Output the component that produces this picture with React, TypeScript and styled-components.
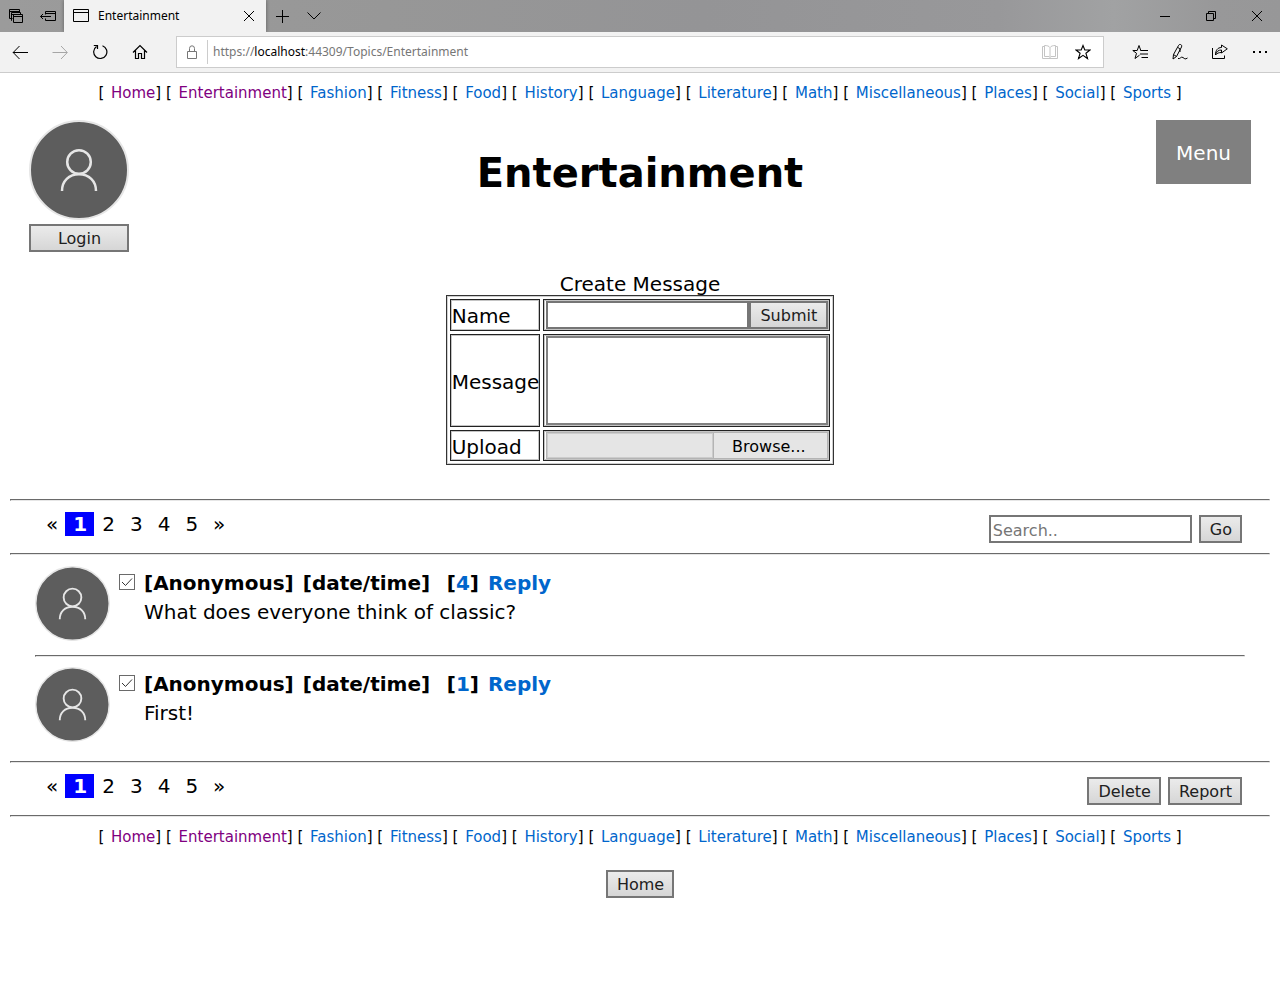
import React from 'react';
import styled, { createGlobalStyle } from 'styled-components';

const GlobalStyle = createGlobalStyle`
  *, *::before, *::after { box-sizing: border-box; }
  body {
    margin: 0;
    background: #fff;
    color: #000;
    font: 20px/24px Verdana, "DejaVu Sans", sans-serif;
  }
  button, input, textarea { font-family: inherit; margin: 0; }
  a { color: #0066cc; text-decoration: none; }
`;

/* ---------- Browser frame ---------- */

const TabStrip = styled.div`
  display: flex;
  height: 32px;
  background: linear-gradient(90deg, #9b9b9b 0%, #979797 30%, #949496 55%, #98989a 78%, #a1a2a3 87%, #989899 95%, #979798 100%);
`;

const FrameButton = styled.button<{ $width: number; $color?: string }>`
  display: flex;
  align-items: center;
  justify-content: center;
  flex: none;
  width: ${(p) => p.$width}px;
  padding: 0;
  border: 0;
  background: none;
  color: ${(p) => p.$color ?? '#000'};
`;

const Tab = styled.div`
  display: flex;
  align-items: center;
  flex: none;
  width: 202px;
  padding-left: 9px;
  background: #f2f2f2;
  font: 12px/16px "Segoe UI", "Noto Sans", sans-serif;
  box-shadow: 0 0 4px rgba(0, 0, 0, 0.4);
  clip-path: inset(0 -4px 0 -4px);
`;

const TabTitle = styled.span`
  flex: 1;
  margin-left: 9px;
`;

const Spacer = styled.div`
  flex: 1;
`;

const Toolbar = styled.div`
  display: flex;
  height: 41px;
  padding: 4px 0;
  background: #f2f2f2;
  border-bottom: 1px solid #cccccc;
`;

const AddressBar = styled.div`
  display: flex;
  align-items: center;
  flex: 1;
  margin: 0 16px;
  border: 1px solid #cccccc;
  background: #fff;
  font: 12px/16px "Segoe UI", "Noto Sans", sans-serif;
  color: #767676;
`;

const Divider = styled.span`
  width: 1px;
  height: 24px;
  margin-right: 5px;
  background: #cccccc;
`;

const Host = styled.span`
  color: #000;
`;

const Icon = styled.svg`
  display: block;
  flex: none;
  fill: none;
  stroke: currentColor;
  stroke-width: 1;
`;

/* ---------- Shared page parts ---------- */

const PushButton = styled.button<{ $wide?: boolean }>`
  flex: none;
  width: ${(p) => (p.$wide ? '100px' : 'auto')};
  height: 28px;
  padding: 2px 8px 0 9px;
  border: 2px solid #767676;
  background: linear-gradient(#ebebeb, #d6d6d6);
  color: #202020;
  font-size: 16px;
  line-height: 22px;
`;

const TextBox = styled.input`
  flex: none;
  width: 203px;
  height: 28px;
  padding: 2px 2px 0;
  border: 2px solid #767676;
  border-radius: 0;
  background: #fff;
  font-size: 16px;
  &::placeholder { color: #767676; opacity: 1; }
`;

const TopicNav = styled.nav`
  padding: 10px 8px 0;
  text-align: center;
  font-size: 15px;
  line-height: 20px;
`;

const TopicLink = styled.a<{ $seen: boolean }>`
  margin-left: 2px;
  color: ${(p) => (p.$seen ? '#800080' : '#0066cc')};
`;

const Rule = styled.hr<{ $inset?: boolean }>`
  height: 2px;
  margin: 0 ${(p) => (p.$inset ? 0 : 10)}px;
  border: 1px solid;
  border-color: #6a6a6a #e6e6e6 #e6e6e6 #6a6a6a;
`;

/* ---------- Header ---------- */

const Header = styled.header`
  display: grid;
  grid-template-columns: 1fr auto 1fr;
  align-items: start;
  padding: 17px 29px 0;
`;

const Account = styled.div`
  display: flex;
  flex-direction: column;
  gap: 4px;
  width: 100px;
`;

const Title = styled.h1`
  margin: 0;
  padding-top: 29px;
  font-size: 40px;
  line-height: 48px;
`;

const MenuButton = styled.button`
  justify-self: end;
  padding: 21px 20px 19px;
  border: 0;
  background: #808080;
  color: #fff;
  font-size: 20px;
  line-height: 24px;
`;

/* ---------- Message form ---------- */

const MessageForm = styled.form`
  display: flex;
  justify-content: center;
  padding: 21px 0 34px;
`;

const FormTable = styled.table`
  border: 1px solid #333;
  border-spacing: 3px;
  box-shadow: inset 0 0 0 1px #cfcfcf;
`;

const Caption = styled.caption`
  line-height: 22px;
`;

const LabelCell = styled.th`
  padding: 2px 0 0 1px;
  border: 1px solid #222;
  box-shadow: inset 0 0 0 1px #c4c4c4;
  text-align: left;
  font-weight: normal;
`;

const FieldCell = styled.td`
  padding: 1px 1px 1px 2px;
  border: 1px solid #222;
  box-shadow: inset 0 0 0 1px #c4c4c4;
`;

const FieldRow = styled.div`
  display: flex;
  width: 282px;
`;

const GrowButton = styled(PushButton)`
  flex: 1;
  padding: 2px 0 0;
`;

const MessageBox = styled.textarea`
  display: block;
  width: 282px;
  height: 89px;
  border: 2px solid #808080;
  border-radius: 0;
  resize: none;
  font-size: 16px;
`;

const FileInput = styled.input`
  width: 1px;
  height: 1px;
  margin-right: -1px;
  opacity: 0;
`;

const FilePicker = styled.label`
  display: flex;
  flex: 1;
  height: 27px;
  background: #e5e5e5;
  border: 1px solid #b4b4b4;
  font-size: 16px;
  line-height: 28px;
`;

const FileName = styled.span`
  flex: 1;
  border: 1px solid #cccccc;
`;

const BrowseText = styled.span`
  width: 114px;
  padding-right: 4px;
  border-left: 1px solid #b4b4b4;
  text-align: center;
`;

/* ---------- Paging and posts ---------- */

const PageBar = styled.div`
  display: flex;
  justify-content: space-between;
  height: 52px;
  padding: 11px 38px 0;
`;

const Pager = styled.nav`
  display: flex;
  align-items: flex-start;
`;

const PageLink = styled.a<{ $current?: boolean }>`
  padding: 0 7px 0 8px;
  background: ${(p) => (p.$current ? '#0000ff' : 'transparent')};
  color: ${(p) => (p.$current ? '#fff' : '#000')};
  font-weight: ${(p) => (p.$current ? 'bold' : 'normal')};
`;

const BarActions = styled.form`
  display: flex;
  gap: 7px;
  padding-top: 3px;
`;

const PostList = styled.main`
  padding: 1px 35px 5px;
`;

const Post = styled.article`
  display: flex;
  padding: 10px 0 14px;
`;

const TickWrap = styled.span`
  display: grid;
  width: 16px;
  height: 16px;
  margin: 8px 9px 0;
  & > * { grid-area: 1 / 1; }
`;

const Tick = styled.input`
  width: 16px;
  height: 16px;
  appearance: none;
  border: 1px solid #6a6a6a;
  background: #fff;
  &:not(:checked) + svg { visibility: hidden; }
`;

const TickMark = styled(Icon)`
  pointer-events: none;
  color: #333;
`;

const PostTitle = styled.h2`
  display: flex;
  gap: 9px;
  margin: 5px 0;
  font-size: 20px;
  line-height: 24px;
`;

const PostDate = styled.span`
  min-width: 135px;
`;

const PostText = styled.p`
  margin: 0;
`;

const Footer = styled.footer`
  display: flex;
  justify-content: center;
  padding: 23px 0;
`;

function Avatar({ size }: { size: number }) {
  return (
    <svg width={size} height={size} viewBox="0 0 100 100" role="img" aria-label="User picture">
      <circle cx="50" cy="50" r="49" fill="#5d5d5d" stroke="#e6e6e6" strokeWidth="2" />
      <g fill="none" stroke="#e6e6e6" strokeWidth="2.500">
        <circle cx="50" cy="42" r="11.800" />
        <path d="M33 71C33 61 40 54.300 50 54.300S67 61 67 71" />
      </g>
    </svg>
  );
}

const topics = [
  'Home', 'Entertainment', 'Fashion', 'Fitness', 'Food', 'History', 'Language',
  'Literature', 'Math', 'Miscellaneous', 'Places', 'Social', 'Sports',
];

function Topics({ label }: { label: string }) {
  return (
    <TopicNav aria-label={label}>
      {topics.map((topic, i) => (
        <React.Fragment key={topic}>
          {'[ '}
          <TopicLink href={`#${topic}`} $seen={i < 2}>{topic}</TopicLink>
          {i === topics.length - 1 ? ' ]' : '] '}
        </React.Fragment>
      ))}
    </TopicNav>
  );
}

function Pages({ label }: { label: string }) {
  return (
    <Pager aria-label={label}>
      {['«', '1', '2', '3', '4', '5', '»'].map((page) => (
        <PageLink key={page} href="#page" $current={page === '1'}>{page}</PageLink>
      ))}
    </Pager>
  );
}

const posts = [
  { replies: 4, text: 'What does everyone think of classic?' },
  { replies: 1, text: 'First!' },
];

function BrowserFrame() {
  return (
    <>
      <TabStrip>
        <FrameButton $width={32} aria-label="Tabs set aside">
          <Icon width="16" height="16" viewBox="0 0 16 16">
            <path d="M4.500 10.500H1.500V1.500H11.500V4M1.500 3.500H11.500M4 12.500H3.500V4.500H12.500V6M3.500 6.500H7" />
            <path d="M5.500 6.500H14.500V14.500H5.500ZM5.500 8.500H14.500" />
          </Icon>
        </FrameButton>
        <FrameButton $width={32} aria-label="Set tabs aside">
          <Icon width="16" height="16" viewBox="0 0 16 16">
            <path d="M5.500 6.500V3.500H15.500V12.500H5.500V10.500M5.500 5.500H15.500M0.500 8.500H11M3 6L0.500 8.500L3 11" />
          </Icon>
        </FrameButton>
        <Tab>
          <Icon width="16" height="16" viewBox="0 0 16 16">
            <path d="M0.500 1.500H15.500V13.500H0.500ZM0.500 4.500H15.500" />
          </Icon>
          <TabTitle>Entertainment</TabTitle>
          <FrameButton $width={34} aria-label="Close tab">
            <Icon width="10" height="10" viewBox="0 0 10 10">
              <path d="M0 0L10 10M10 0L0 10" />
            </Icon>
          </FrameButton>
        </Tab>
        <FrameButton $width={32} aria-label="New tab">
          <Icon width="13" height="13" viewBox="0 0 13 13">
            <path d="M6.500 0V13M0 6.500H13" />
          </Icon>
        </FrameButton>
        <FrameButton $width={32} aria-label="Show tab previews">
          <Icon width="14" height="8" viewBox="0 0 14 8">
            <path d="M0.500 0.500L7 7L13.500 0.500" />
          </Icon>
        </FrameButton>
        <Spacer />
        <FrameButton $width={46} aria-label="Minimize">
          <Icon width="10" height="10" viewBox="0 0 10 10">
            <path d="M0 5.500H10" />
          </Icon>
        </FrameButton>
        <FrameButton $width={46} aria-label="Restore">
          <Icon width="10" height="10" viewBox="0 0 10 10">
            <path d="M0.500 2.500H7.500V9.500H0.500ZM2.500 2.500V0.500H9.500V7.500H7.500" />
          </Icon>
        </FrameButton>
        <FrameButton $width={46} aria-label="Close">
          <Icon width="10" height="10" viewBox="0 0 10 10">
            <path d="M0 0L10 10M10 0L0 10" />
          </Icon>
        </FrameButton>
      </TabStrip>
      <Toolbar>
        <FrameButton $width={40} aria-label="Back">
          <Icon width="16" height="14" viewBox="0 0 16 14">
            <path d="M1 7.500H16M7.500 1L1.200 7.500L7.500 14" />
          </Icon>
        </FrameButton>
        <FrameButton $width={40} $color="#a6a6a6" aria-label="Forward">
          <Icon width="16" height="14" viewBox="0 0 16 14">
            <path d="M0.500 7.500H15M9 1L15.300 7.500L9 14" />
          </Icon>
        </FrameButton>
        <FrameButton $width={40} aria-label="Refresh">
          <Icon width="16" height="16" viewBox="0 0 16 16">
            <path d="M10.500 1.700A6.600 6.600 0 1 1 4.500 2.500M1.800 1.500H5.500V5" strokeWidth="1.200" />
          </Icon>
        </FrameButton>
        <FrameButton $width={40} aria-label="Home">
          <Icon width="16" height="16" viewBox="0 0 16 16">
            <path d="M1 8.500L8 1.500L15 8.500M3.500 6.500V14.500H6.500V9.500H9.500V14.500H12.500V6.500" strokeWidth="1.200" />
          </Icon>
        </FrameButton>
        <AddressBar>
          <FrameButton $width={30} $color="#767676" aria-label="Site information">
            <Icon width="12" height="14" viewBox="0 0 12 14">
              <path d="M1.500 6.500H10.500V13.500H1.500ZM3.500 6.500V3.500A2.500 2.700 0 0 1 8.500 3.500V6.500" />
            </Icon>
          </FrameButton>
          <Divider />
          <span>https://<Host>localhost</Host>:44309/Topics/Entertainment</span>
          <Spacer />
          <FrameButton $width={24} $color="#c4c4c4" aria-label="Reading view">
            <Icon width="16" height="16" viewBox="0 0 16 16">
              <path d="M8 3.500C7 2 5 1.500 2.500 1.500V12.500H7L8 13.500L9 12.500H13.500V1.500C11 1.500 9 2 8 3.500V13.500M2.500 2.500H0.500V14.500H15.500V2.500H13.500" />
            </Icon>
          </FrameButton>
          <FrameButton $width={41} aria-label="Add to favorites">
            <Icon width="16" height="16" viewBox="0 0 16 16">
              <path d="M8 1.500L9.800 6H15L10.900 9.200L12.500 14.500L8 11.300L3.500 14.500L5.100 9.200L1 6H6.200Z" strokeWidth="1.100" />
            </Icon>
          </FrameButton>
        </AddressBar>
        <FrameButton $width={40} aria-label="Favorites">
          <Icon width="16" height="16" viewBox="0 0 16 16">
            <path d="M10 6.500H8.800L7 1.500L5.200 6.500H0.800L4.500 9.300L3 14.500L7.500 11.200M8.500 6.500H16M8 10H16M9.500 13.500H16" />
          </Icon>
        </FrameButton>
        <FrameButton $width={40} aria-label="Add notes">
          <Icon width="16" height="16" viewBox="0 0 16 16">
            <path d="M1 15L1.500 10.500L6.500 1.500C7.500 -0.500 10.500 0.500 9.500 3L4.500 12.500L1 15M1.500 10.500L4.500 12.500M6 3.500L8 5V8M6 14.500C8 15.500 9 12 11 13.500S13 15.500 15.500 14" />
          </Icon>
        </FrameButton>
        <FrameButton $width={40} aria-label="Share">
          <Icon width="16" height="16" viewBox="0 0 16 16">
            <path d="M0.500 4V14.500H12.500V11.500M3.500 11C4 7.500 6.500 6 9.500 6V9L15.300 4.800L9.500 1V3.500C5.500 3.500 3.500 6.500 3.500 11C5 9 7 8.500 9.500 8.500" />
          </Icon>
        </FrameButton>
        <FrameButton $width={40} aria-label="Settings and more">
          <Icon width="16" height="4" viewBox="0 0 16 4">
            <path d="M1 2H3M7 2H9M13 2H15" strokeWidth="2" />
          </Icon>
        </FrameButton>
      </Toolbar>
    </>
  );
}

export default function App() {
  return (
    <>
      <GlobalStyle />
      <BrowserFrame />
      <Topics label="Topics" />
      <Header>
        <Account>
          <Avatar size={100} />
          <PushButton $wide>Login</PushButton>
        </Account>
        <Title>Entertainment</Title>
        <MenuButton>Menu</MenuButton>
      </Header>

      <MessageForm onSubmit={(e) => e.preventDefault()}>
        <FormTable>
          <Caption>Create Message</Caption>
          <tbody>
            <tr>
              <LabelCell scope="row"><label htmlFor="name">Name</label></LabelCell>
              <FieldCell>
                <FieldRow>
                  <TextBox id="name" type="text" />
                  <GrowButton type="submit">Submit</GrowButton>
                </FieldRow>
              </FieldCell>
            </tr>
            <tr>
              <LabelCell scope="row"><label htmlFor="message">Message</label></LabelCell>
              <FieldCell><MessageBox id="message" /></FieldCell>
            </tr>
            <tr>
              <LabelCell scope="row"><label htmlFor="upload">Upload</label></LabelCell>
              <FieldCell>
                <FieldRow>
                  <FileInput id="upload" type="file" />
                  <FilePicker htmlFor="upload">
                    <FileName />
                    <BrowseText>Browse...</BrowseText>
                  </FilePicker>
                </FieldRow>
              </FieldCell>
            </tr>
          </tbody>
        </FormTable>
      </MessageForm>

      <Rule />
      <PageBar>
        <Pages label="Pages" />
        <BarActions onSubmit={(e) => e.preventDefault()}>
          <TextBox type="text" placeholder="Search.." aria-label="Search" />
          <PushButton type="submit">Go</PushButton>
        </BarActions>
      </PageBar>
      <Rule />
      <PostList>
        {posts.map((post, i) => (
          <React.Fragment key={post.text}>
            {i > 0 && <Rule $inset />}
            <Post>
              <Avatar size={75} />
              <TickWrap>
                <Tick type="checkbox" defaultChecked aria-label={`Select post ${i + 1}`} />
                <TickMark width="16" height="16" viewBox="0 0 16 16">
                  <path d="M3 8L6.500 11.500L13 4.500" />
                </TickMark>
              </TickWrap>
              <div>
                <PostTitle>
                  <span>[Anonymous]</span>
                  <PostDate>[date/time]</PostDate>
                  <span>[<a href="#replies">{post.replies}</a>]</span>
                  <a href="#reply">Reply</a>
                </PostTitle>
                <PostText>{post.text}</PostText>
              </div>
            </Post>
          </React.Fragment>
        ))}
      </PostList>
      <Rule />
      <PageBar>
        <Pages label="Pages, bottom" />
        <BarActions onSubmit={(e) => e.preventDefault()}>
          <PushButton type="button">Delete</PushButton>
          <PushButton type="button">Report</PushButton>
        </BarActions>
      </PageBar>
      <Rule />
      <Topics label="Topics, bottom" />
      <Footer>
        <PushButton>Home</PushButton>
      </Footer>
    </>
  );
}
